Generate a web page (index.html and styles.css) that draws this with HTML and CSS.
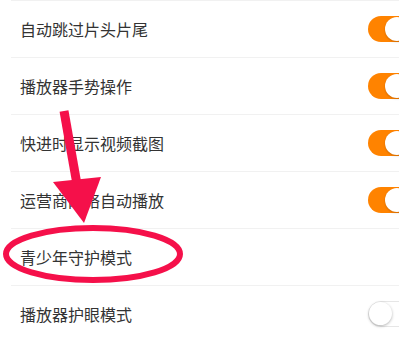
FILE: index.html
```html
<!DOCTYPE html>
<html lang="zh-CN">
<head>
<meta charset="utf-8">
<title>设置</title>
<link rel="stylesheet" href="styles.css">
</head>
<body>
<div class="page">
  <ul class="list">
    <li class="row"><span class="label">自动跳过片头片尾</span><span class="switch on"><span class="knob"></span></span></li>
    <li class="row"><span class="label">播放器手势操作</span><span class="switch on"><span class="knob"></span></span></li>
    <li class="row"><span class="label">快进时显示视频截图</span><span class="switch on"><span class="knob"></span></span></li>
    <li class="row"><span class="label">运营商网络自动播放</span><span class="switch on"><span class="knob"></span></span></li>
    <li class="row"><span class="label">青少年守护模式</span></li>
    <li class="row"><span class="label">播放器护眼模式</span><span class="switch off"><span class="knob"></span></span></li>
  </ul>
  <svg class="annot" width="399" height="339" viewBox="0 0 399 339" xmlns="http://www.w3.org/2000/svg">
    <line x1="64" y1="111" x2="78" y2="190" stroke="#f5104a" stroke-width="9"/>
    <polygon points="53,182 101,177 84,223" fill="#f5104a"/>
    <ellipse cx="93" cy="254" rx="87" ry="26" fill="none" stroke="#f5104a" stroke-width="6"/>
  </svg>
</div>
</body>
</html>
```
FILE: styles.css
```css
html, body {
  margin: 0;
  padding: 0;
  background: #ffffff;
}
body {
  width: 399px;
  height: 339px;
  overflow: hidden;
  font-family: "Noto Sans CJK SC", "Noto Sans", sans-serif;
}
.page {
  position: relative;
  width: 399px;
  height: 339px;
  overflow: hidden;
}
.list {
  list-style: none;
  margin: 0 0 0 11px;
  padding: 0;
  border-top: 1px solid #f1f1f1;
}
.row {
  display: flex;
  align-items: center;
  height: 56px;
  padding-left: 9px;
  border-bottom: 1px solid #f1f1f1;
}
.label {
  font-size: 16px;
  color: #333333;
  line-height: 20px;
}
.switch {
  position: relative;
  margin-left: auto;
  margin-right: -20px;
  width: 51px;
  height: 26px;
  border-radius: 13px;
  box-sizing: border-box;
  flex: none;
}
.switch.on {
  background: #ff8300;
}
.switch.on .knob {
  position: absolute;
  left: 17px;
  top: 1px;
  width: 24px;
  height: 24px;
  border-radius: 50%;
  background: #ffffff;
  box-shadow: 0 1px 2px rgba(0, 0, 0, 0.2);
}
.switch.off {
  background: #ffffff;
  border: 1px solid #e6e6e6;
}
.switch.off .knob {
  position: absolute;
  left: 0;
  top: 0;
  width: 23px;
  height: 23px;
  border-radius: 50%;
  background: #ffffff;
  box-shadow: 0 1px 3px rgba(0, 0, 0, 0.3);
}
.annot {
  position: absolute;
  left: 0;
  top: 0;
}
```
